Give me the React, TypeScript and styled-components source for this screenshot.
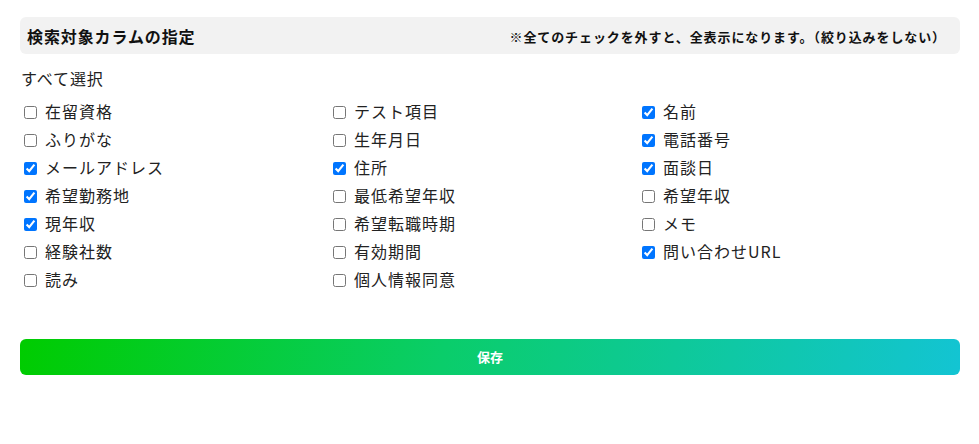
import React, { useState } from "react";
import styled, { createGlobalStyle } from "styled-components";

const Global = createGlobalStyle`
  html, body { margin: 0; padding: 0; background: #fff; }
  body { font-family: "Noto Sans CJK JP", "Noto Sans", sans-serif; color: #222; }
`;

const Page = styled.div`
  width: 940px;
  padding: 17px 19px 0 20px;
`;

const Header = styled.div`
  display: flex;
  align-items: center;
  justify-content: space-between;
  height: 37px;
  box-sizing: border-box;
  padding: 0 14px 0 7px;
  background: #f2f2f2;
  border-radius: 6px;
`;

const Title = styled.div`
  font-size: 16px;
  font-weight: 700;
  letter-spacing: 0.9px;
  color: #111;
`;

const Note = styled.div`
  font-size: 13px;
  font-weight: 700;
  letter-spacing: 0.9px;
  color: #111;
  padding-top: 2px;
`;

const SelectAll = styled.div`
  margin-top: 12px;
  height: 24px;
  line-height: 24px;
  font-size: 16px;
  letter-spacing: 0.9px;
  padding-left: 1px;
  color: #222;
`;

const Grid = styled.div`
  margin-top: 7px;
  display: grid;
  grid-template-columns: 309px 309px 309px;
  grid-template-rows: repeat(7, 28px);
`;

const Item = styled.label`
  display: flex;
  align-items: center;
  font-size: 16px;
  color: #222;
  letter-spacing: 1px;
`;

const Box = styled.input`
  width: 13px;
  height: 13px;
  margin: 2px 8px 0 4px;
  accent-color: #0075ff;
`;

const Save = styled.button`
  display: block;
  width: 940px;
  height: 36px;
  margin-top: 46px;
  border: none;
  border-radius: 6px;
  background: linear-gradient(100deg, #00cc00 0%, #0acd6a 45%, #13c4d3 100%);
  color: #fff;
  font-family: "Noto Sans CJK JP", "Noto Sans", sans-serif;
  font-size: 13px;
  font-weight: 700;
  padding-bottom: 2px;
  cursor: pointer;
`;

const columns: [string, boolean][][] = [
  [
    ["在留資格", false],
    ["ふりがな", false],
    ["メールアドレス", true],
    ["希望勤務地", true],
    ["現年収", true],
    ["経験社数", false],
    ["読み", false],
  ],
  [
    ["テスト項目", false],
    ["生年月日", false],
    ["住所", true],
    ["最低希望年収", false],
    ["希望転職時期", false],
    ["有効期間", false],
    ["個人情報同意", false],
  ],
  [
    ["名前", true],
    ["電話番号", true],
    ["面談日", true],
    ["希望年収", false],
    ["メモ", false],
    ["問い合わせURL", true],
  ],
];

export default function App() {
  const initial: Record<string, boolean> = {};
  columns.flat().forEach(([k, v]) => (initial[k] = v));
  const [state, setState] = useState(initial);

  return (
    <Page>
      <Global />
      <Header>
        <Title>検索対象カラムの指定</Title>
        <Note>※全てのチェックを外すと、全表示になります。（絞り込みをしない）</Note>
      </Header>
      <SelectAll>すべて選択</SelectAll>
      <Grid>
        {columns.map((col, ci) =>
          col.map(([name], ri) => (
            <Item key={name} style={{ gridColumn: ci + 1, gridRow: ri + 1 }}>
              <Box
                type="checkbox"
                checked={state[name]}
                onChange={() => setState({ ...state, [name]: !state[name] })}
              />
              {name}
            </Item>
          ))
        )}
      </Grid>
      <Save>保存</Save>
    </Page>
  );
}
